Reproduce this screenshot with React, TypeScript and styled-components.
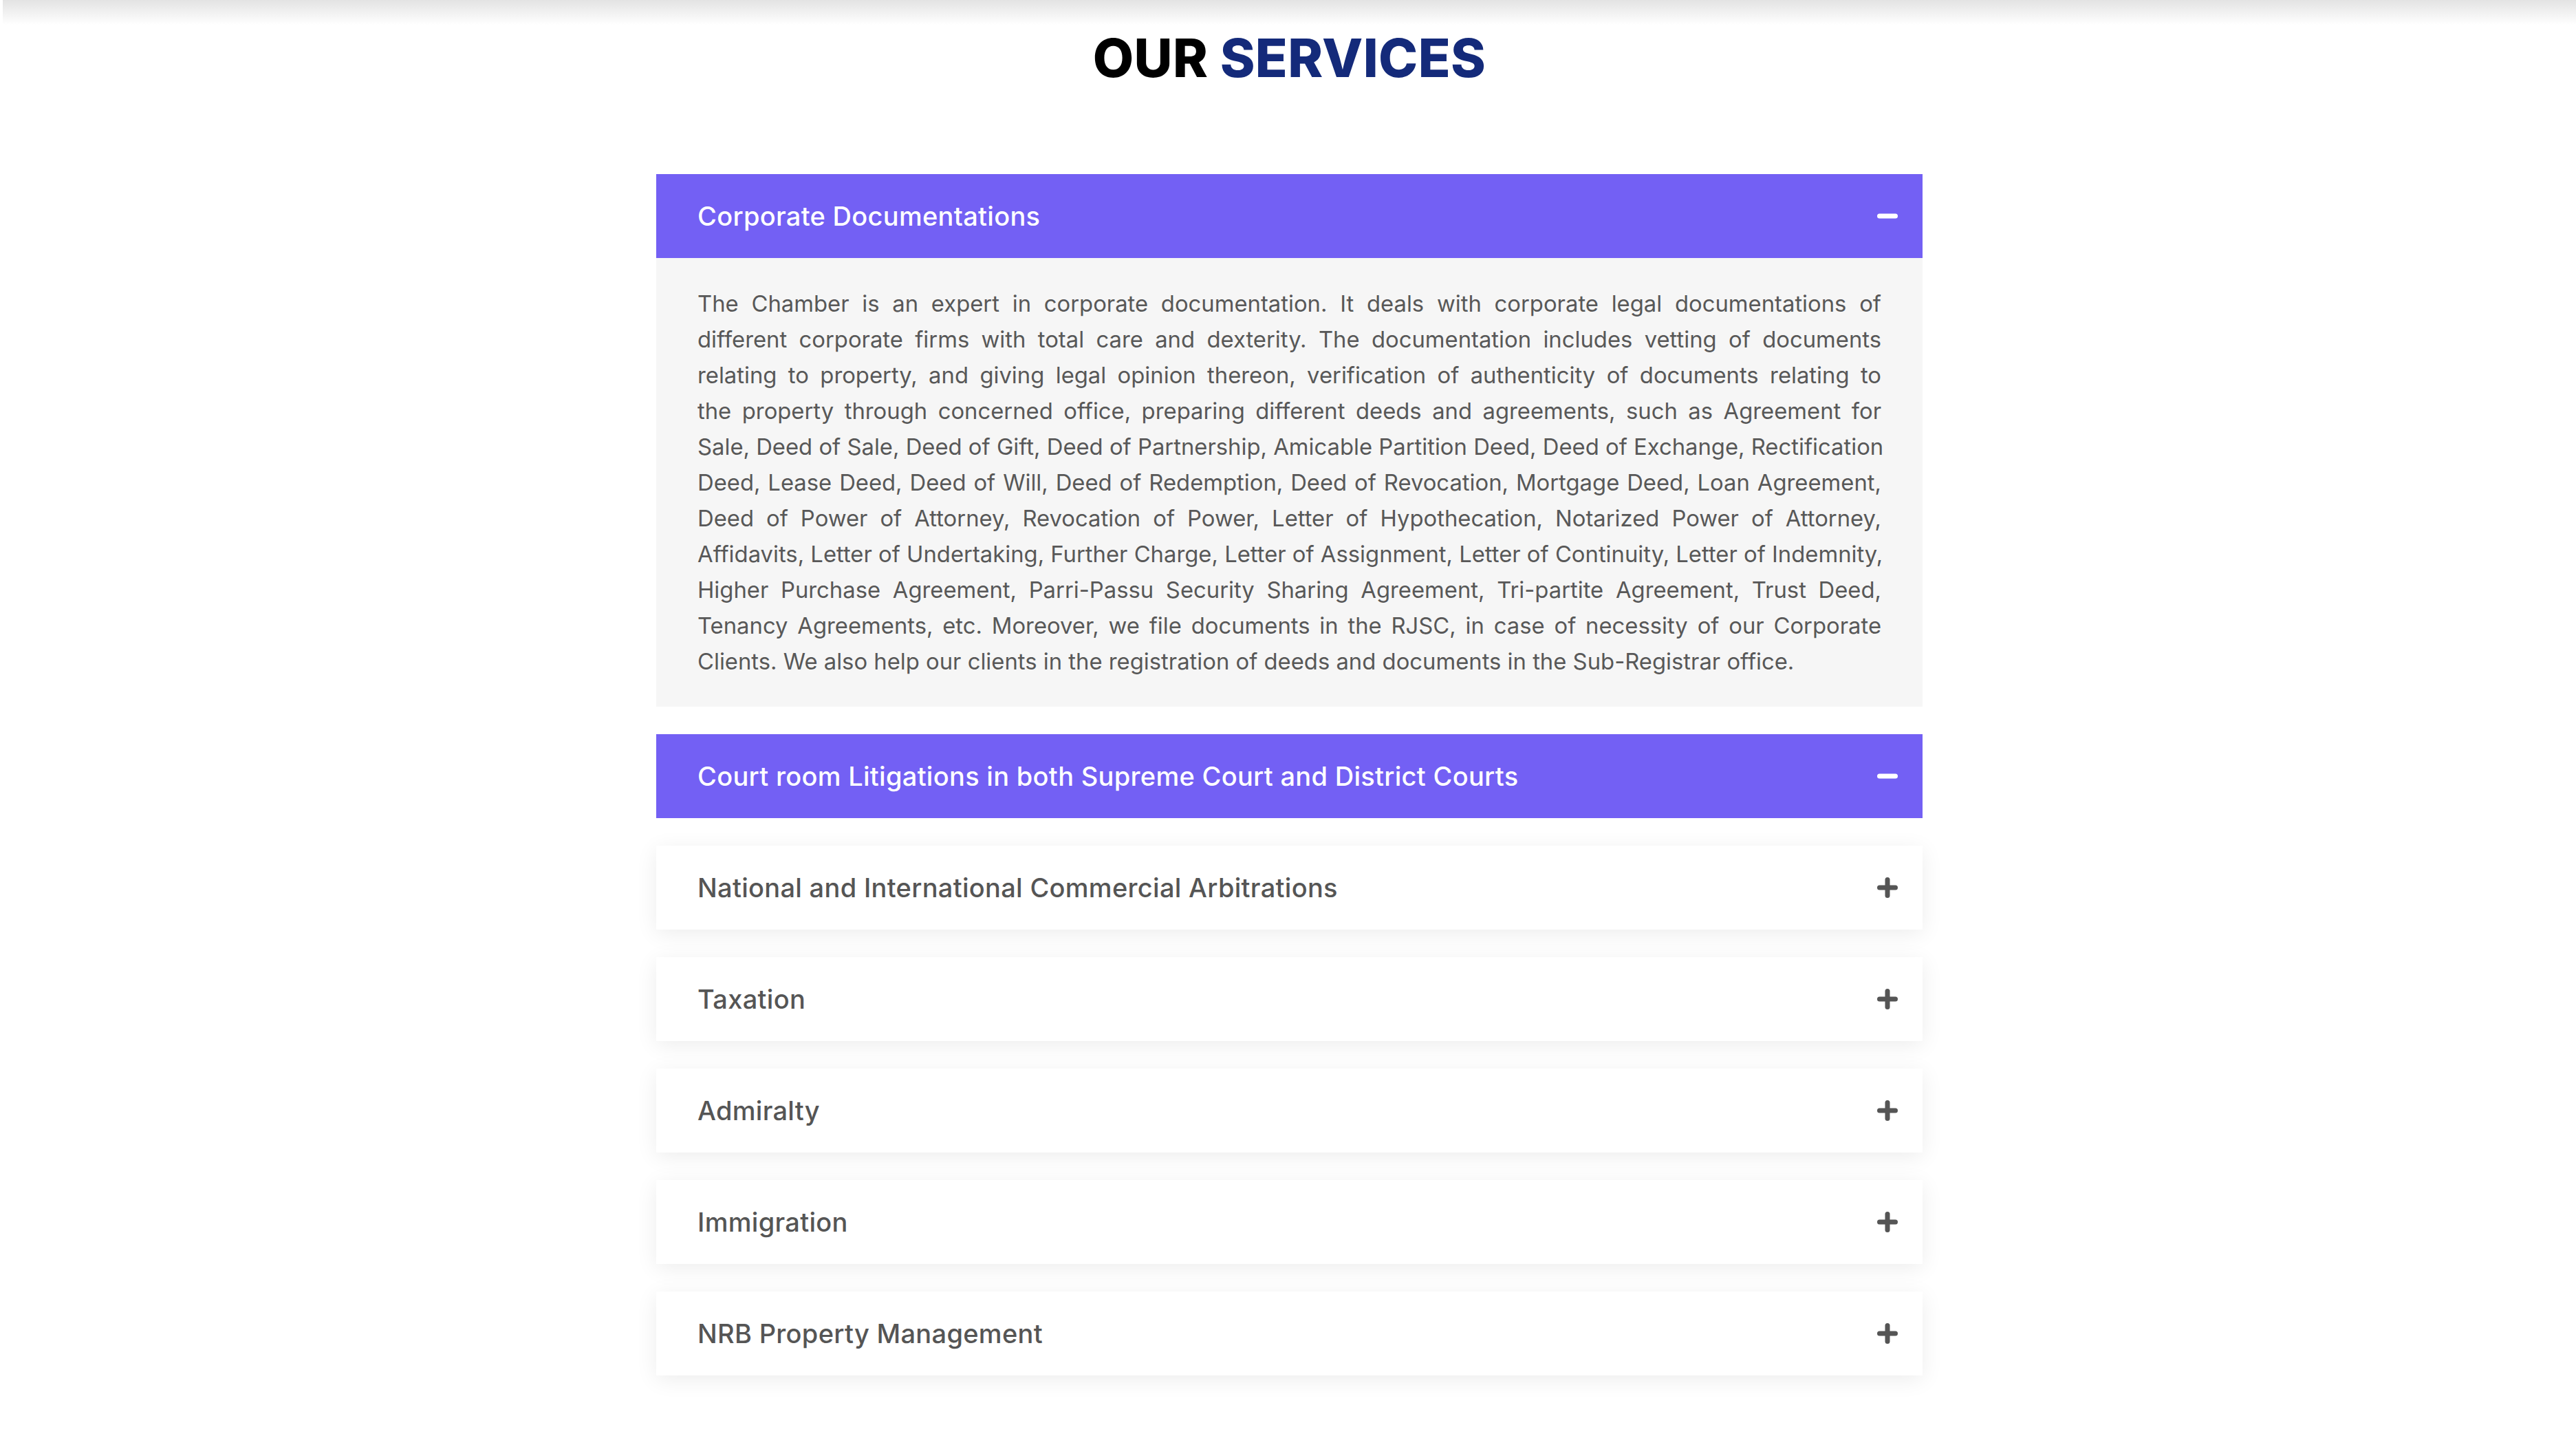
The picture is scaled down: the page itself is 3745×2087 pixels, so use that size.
import { useState } from "react";
import styled, { createGlobalStyle } from "styled-components";

const GlobalStyle = createGlobalStyle`
  * {
    box-sizing: border-box;
  }
  body {
    margin: 0;
    background: #ffffff;
    font-family: "Inter", "Liberation Sans", sans-serif;
  }
`;

const Page = styled.div`
  min-height: 2087px;
  padding-left: 4px;
  background: #ffffff;
`;

const TopShade = styled.div`
  height: 36px;
  background: linear-gradient(to bottom, #e3e3e3, rgba(255, 255, 255, 0));
`;

const Title = styled.h2`
  margin: 10px 0 0;
  text-align: center;
  font-family: "Inter", "Liberation Sans", sans-serif;
  font-size: 77px;
  line-height: 1;
  font-weight: 800;
  letter-spacing: 0.4px;
  color: #000000;
`;

const Accent = styled.span`
  color: #142a7a;
`;

const AccordionList = styled.div`
  width: 1841px;
  margin: 130px auto 0;
  display: flex;
  flex-direction: column;
  gap: 40px;
`;

const Item = styled.div<{ open: boolean }>`
  display: flex;
  flex-direction: column;
  box-shadow: ${(props) =>
    props.open ? "none" : "0 6px 30px rgba(0, 0, 0, 0.075)"};
`;

const ItemHeader = styled.button<{ open: boolean }>`
  height: 122px;
  width: 100%;
  border: none;
  margin: 0;
  padding: 0 36px 0 60px;
  display: flex;
  align-items: center;
  justify-content: space-between;
  cursor: pointer;
  text-align: left;
  background: ${(props) => (props.open ? "#7360f4" : "#ffffff")};
  color: ${(props) => (props.open ? "#ffffff" : "#555555")};
`;

const ItemTitle = styled.span`
  font-family: "Inter", "Liberation Sans", sans-serif;
  font-size: 38px;
  font-weight: 500;
  letter-spacing: 0.3px;
`;

const ItemBody = styled.div`
  background: #f6f6f6;
  padding: 40px 60px;
`;

const Paragraph = styled.p`
  margin: 0;
  font-family: "Inter", "Liberation Sans", sans-serif;
  font-size: 32.8px;
  line-height: 52px;
  font-weight: 400;
  color: #585858;
  text-align: justify;
`;

const Line = styled.span<{ last?: boolean }>`
  display: block;
  white-space: nowrap;
  text-align-last: ${(props) => (props.last ? "left" : "justify")};
`;

const IconSvg = styled.svg`
  width: 30px;
  height: 30px;
  flex-shrink: 0;
`;

const ToggleIcon = ({ open }: { open: boolean }) => (
  <IconSvg viewBox="0 0 30 30">
    <line
      x1="3.5"
      y1="15"
      x2="26.5"
      y2="15"
      stroke="currentColor"
      strokeWidth="7"
      strokeLinecap="round"
    />
    {!open && (
      <line
        x1="15"
        y1="3.5"
        x2="15"
        y2="26.5"
        stroke="currentColor"
        strokeWidth="7"
        strokeLinecap="round"
      />
    )}
  </IconSvg>
);

interface Service {
  title: string;
  lines?: string[];
}

const services: Service[] = [
  {
    title: "Corporate Documentations",
    lines: [
      "The Chamber is an expert in corporate documentation. It deals with corporate legal documentations of",
      "different corporate firms with total care and dexterity. The documentation includes vetting of documents",
      "relating to property, and giving legal opinion thereon, verification of authenticity of documents relating to",
      "the property through concerned office, preparing different deeds and agreements, such as Agreement for",
      "Sale, Deed of Sale, Deed of Gift, Deed of Partnership, Amicable Partition Deed, Deed of Exchange, Rectification",
      "Deed, Lease Deed, Deed of Will, Deed of Redemption, Deed of Revocation, Mortgage Deed, Loan Agreement,",
      "Deed of Power of Attorney, Revocation of Power, Letter of Hypothecation, Notarized Power of Attorney,",
      "Affidavits, Letter of Undertaking, Further Charge, Letter of Assignment, Letter of Continuity, Letter of Indemnity,",
      "Higher Purchase Agreement, Parri-Passu Security Sharing Agreement, Tri-partite Agreement, Trust Deed,",
      "Tenancy Agreements, etc. Moreover, we file documents in the RJSC, in case of necessity of our Corporate",
      "Clients. We also help our clients in the registration of deeds and documents in the Sub-Registrar office.",
    ],
  },
  { title: "Court room Litigations in both Supreme Court and District Courts" },
  { title: "National and International Commercial Arbitrations" },
  { title: "Taxation" },
  { title: "Admiralty" },
  { title: "Immigration" },
  { title: "NRB Property Management" },
];

export default function App() {
  const [openItems, setOpenItems] = useState<number[]>([0, 1]);

  const toggle = (index: number) => {
    openItems.includes(index)
      ? setOpenItems(openItems.filter((i) => i !== index))
      : setOpenItems([...openItems, index]);
  };

  return (
    <Page>
      <GlobalStyle />
      <TopShade />
      <Title>
        OUR <Accent>SERVICES</Accent>
      </Title>
      <AccordionList>
        {services.map((service, index) => {
          const open = openItems.includes(index);
          return (
            <Item key={service.title} open={open}>
              <ItemHeader open={open} onClick={() => toggle(index)}>
                <ItemTitle>{service.title}</ItemTitle>
                <ToggleIcon open={open} />
              </ItemHeader>
              {open && service.lines && (
                <ItemBody>
                  <Paragraph>
                    {service.lines.map((line, i) => (
                      <Line key={i} last={i === service.lines!.length - 1}>
                        {line}
                      </Line>
                    ))}
                  </Paragraph>
                </ItemBody>
              )}
            </Item>
          );
        })}
      </AccordionList>
    </Page>
  );
}
